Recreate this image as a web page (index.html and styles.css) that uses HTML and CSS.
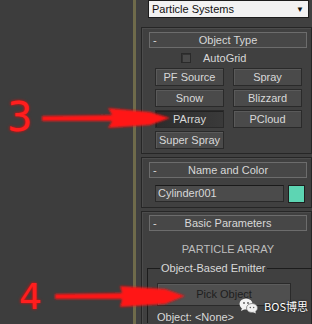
FILE: index.html
```html
<!DOCTYPE html>
<html lang="en">
<head>
    <meta charset="UTF-8">
    <meta name="viewport" content="width=device-width, initial-scale=1.0">
    <title>Create Panel - Particle Systems</title>
    <link rel="stylesheet" href="styles.css">
</head>
<body>

<div class="viewport"></div>
<div class="divider"></div>

<div class="side">
    <div class="dropdown">
        <span>Particle Systems</span>
        <span class="caret">&#9660;</span>
    </div>

    <!-- Object Type -->
    <div class="rollout">
        <div class="rollout-head"><span class="dash">-</span><span>Object Type</span><span></span></div>
        <div class="autogrid"><span class="check"></span><span>AutoGrid</span></div>
        <div class="btn-grid">
            <div class="btn">PF Source</div>
            <div class="btn">Spray</div>
            <div class="btn">Snow</div>
            <div class="btn">Blizzard</div>
            <div class="btn active">PArray</div>
            <div class="btn">PCloud</div>
            <div class="btn">Super Spray</div>
        </div>
    </div>

    <!-- Name and Color -->
    <div class="rollout">
        <div class="rollout-head"><span class="dash">-</span><span>Name and Color</span><span></span></div>
        <div class="name-row">
            <div class="name-field">Cylinder001</div>
            <div class="swatch"></div>
        </div>
    </div>

    <!-- Basic Parameters -->
    <div class="rollout last">
        <div class="rollout-head"><span class="dash">-</span><span>Basic Parameters</span><span></span></div>
        <div class="caption">PARTICLE ARRAY</div>
        <fieldset class="group">
            <legend>Object-Based Emitter</legend>
            <div class="pick">Pick Object</div>
            <div class="picked">Object: &lt;None&gt;</div>
        </fieldset>
    </div>
</div>

<!-- red markers drawn over the screenshot -->
<svg class="marks" width="312" height="324" viewBox="0 0 312 324">
    <defs>
        <filter id="glow" x="-20%" y="-50%" width="140%" height="200%">
            <feGaussianBlur stdDeviation="1.2"/>
        </filter>
    </defs>
    <g fill="#ff1414" filter="url(#glow)">
        <path d="M42 116 L112 115 L108 108 L150 112 L170 118 L150 125 L108 128 L112 121 L42 121 Z"/>
        <path d="M55 294 L122 293 L120 286 L165 289 L185 296 L165 304 L120 307 L122 299 L55 299 Z"/>
    </g>
</svg>
<div class="num num-3">3</div>
<div class="num num-4">4</div>

<div class="watermark">
    <svg width="19" height="16" viewBox="0 0 19 16">
        <ellipse cx="7" cy="6" rx="6.5" ry="5.5" fill="#f2f2f2"/>
        <path d="M3 10 L2 13 L6 11 Z" fill="#f2f2f2"/>
        <ellipse cx="13" cy="10" rx="5.5" ry="4.5" fill="#f2f2f2" stroke="#7a7a7a" stroke-width="0.8"/>
        <path d="M16 13 L17 15.5 L14 14 Z" fill="#f2f2f2"/>
        <circle cx="5" cy="5" r="0.9" fill="#555"/>
        <circle cx="9" cy="5" r="0.9" fill="#555"/>
        <circle cx="11.3" cy="9.5" r="0.7" fill="#555"/>
        <circle cx="14.7" cy="9.5" r="0.7" fill="#555"/>
    </svg>
    <span>BOS博思</span>
</div>

</body>
</html>
```

FILE: styles.css
```css
* {
    margin: 0;
    padding: 0;
    box-sizing: border-box;
}

body {
    position: relative;
    width: 312px;
    height: 324px;
    overflow: hidden;
    display: flex;
    background: #3d3d3d;
    font-family: 'Liberation Sans', 'DejaVu Sans', sans-serif;
    font-size: 11px;
    color: #d8d8d8;
}

.viewport {
    width: 133px;
    flex-shrink: 0;
}

.divider {
    width: 3px;
    flex-shrink: 0;
    background: #6f6b4b;
}

.side {
    width: 176px;
    flex-shrink: 0;
    padding-left: 5px;
    background: #404040;
}

.dropdown {
    display: flex;
    justify-content: space-between;
    align-items: center;
    margin-left: 7px;
    width: 161px;
    height: 18px;
    padding: 0 4px 0 3px;
    background: #f2f2f2;
    border: 1px solid #1c1c1c;
    color: #111;
}

.caret {
    font-size: 8px;
}

.rollout {
    width: 171px;
    margin-top: 9px;
    padding: 4px 4px 4px 7px;
    border: 1px solid #262626;
    box-shadow: inset 1px 1px 0 #4c4c4c;
}

.rollout + .rollout {
    margin-top: 3px;
}

.rollout-head {
    display: grid;
    grid-template-columns: 12px 1fr 12px;
    height: 16px;
    line-height: 14px;
    text-align: center;
    background: #474747;
    border: 1px solid #6c6c6c;
}

.dash {
    text-align: left;
    padding-left: 3px;
}

.autogrid {
    display: flex;
    align-items: center;
    gap: 12px;
    margin-top: 4px;
    padding-left: 32px;
    height: 12px;
}

.check {
    width: 10px;
    height: 10px;
    background: #4a4a4a;
    border: 1px solid #2a2a2a;
    box-shadow: inset 1px 1px 0 #333;
}

.btn-grid {
    display: grid;
    grid-template-columns: 69px 69px;
    grid-auto-rows: 18px;
    column-gap: 9px;
    row-gap: 3px;
    margin-top: 4px;
    padding-left: 6px;
}

.btn {
    display: flex;
    justify-content: center;
    align-items: center;
    background: #4a4a4a;
    border: 1px solid #2a2a2a;
    box-shadow: inset 1px 1px 0 #5a5a5a;
}

.btn.active {
    background: linear-gradient(90deg, #2c2c2c, #3a3a3a);
    box-shadow: inset 1px 1px 0 #222;
}

.name-row {
    display: flex;
    gap: 4px;
    margin-top: 7px;
    padding-left: 6px;
}

.name-field {
    width: 129px;
    height: 17px;
    line-height: 15px;
    padding-left: 2px;
    background: #4b4b4b;
    border: 1px solid #2a2a2a;
    border-top-color: #1a1a1a;
}

.swatch {
    width: 17px;
    height: 18px;
    background: #5dd5b3;
    border: 1px solid #1e1e1e;
}

.rollout.last {
    padding-top: 3px;
    padding-bottom: 2px;
}

.caption {
    margin-top: 12px;
    text-align: center;
    color: #bdbdbd;
}

.group {
    margin: 7px -6px 0 -2px;
    padding: 9px 0 0 9px;
    border: 1px solid #1c1c1c;
    border-right: none;
    border-bottom: none;
}

.group legend {
    margin-left: 3px;
    padding: 0 1px;
}

.pick {
    width: 134px;
    height: 23px;
    line-height: 21px;
    text-align: center;
    color: #1e1e1e;
    background: #4f4f4f;
    border: 1px solid #2a2a2a;
    box-shadow: inset 1px 1px 0 #5c5c5c;
}

.picked {
    margin-top: 5px;
}

.marks {
    position: absolute;
    left: 0;
    top: 0;
}

.num {
    position: absolute;
    font-family: 'DejaVu Sans', sans-serif;
    color: #ff1e1e;
    text-shadow: 0 0 3px #ff0000;
    line-height: 1;
}

.num-3 {
    left: 7px;
    top: 97px;
    font-size: 40px;
}

.num-4 {
    left: 19px;
    top: 279px;
    font-size: 36px;
}

.watermark {
    position: absolute;
    left: 239px;
    top: 298px;
    display: flex;
    align-items: center;
    gap: 6px;
    color: #fff;
    font-family: 'Noto Sans CJK SC', sans-serif;
    font-size: 11px;
    text-shadow: 0 0 2px #000;
}
```
